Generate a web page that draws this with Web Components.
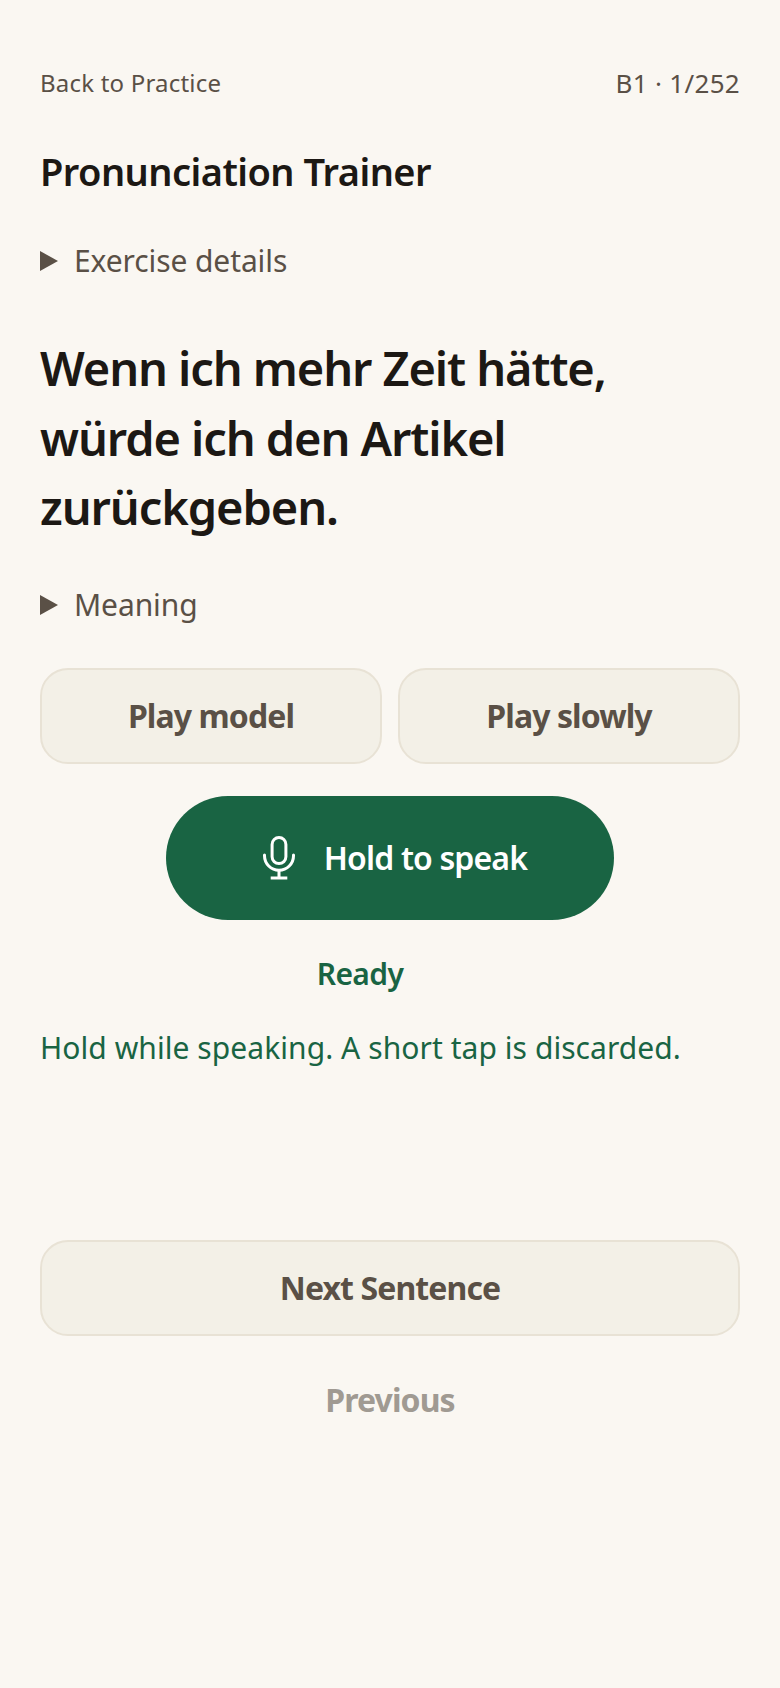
<!DOCTYPE html>
<html lang="en">
<head>
<meta charset="utf-8">
<title>Pronunciation Trainer</title>
<style>
    html, body { margin: 0; background: #faf7f2; }
    body { font-family: "Noto Sans", "Open Sans", sans-serif; }
</style>
</head>
<body>
<trainer-app>
    <trainer-header slot="header" data-back="Back to Practice" data-progress="B1 · 1/252"></trainer-header>
    <h-title slot="title">Pronunciation Trainer</h-title>
    <trainer-disclosure slot="details">Exercise details</trainer-disclosure>
    <trainer-sentence slot="sentence">Wenn ich mehr Zeit hätte, würde ich den Artikel zurückgeben.</trainer-sentence>
    <trainer-disclosure slot="meaning">Meaning</trainer-disclosure>
    <trainer-button slot="play">Play model</trainer-button>
    <trainer-button slot="play">Play slowly</trainer-button>
    <hold-button slot="hold">Hold to speak</hold-button>
    <trainer-status slot="status" data-state="Ready">Hold while speaking. A short tap is discarded.</trainer-status>
    <trainer-button slot="next">Next Sentence</trainer-button>
    <trainer-button slot="previous" data-plain>Previous</trainer-button>
</trainer-app>

<script>
class TrainerApp extends HTMLElement {
    constructor() {
        super();
        this.attachShadow({mode: "open"});
        this.shadowRoot.innerHTML = `
<style>
    :host { display: flex; flex-direction: column; box-sizing: border-box; min-height: 1688px; padding: 64px 40px 0; }
    .title { margin-top: 43px; }
    .details { margin-top: 40px; }
    .sentence { margin-top: 49px; }
    .meaning { margin-top: 38px; }
    .play { display: grid; grid-template-columns: 1fr 1fr; gap: 16px; margin-top: 39px; }
    .hold { display: flex; justify-content: center; margin-top: 32px; }
    .status { margin-top: 32px; }
    .next { display: grid; margin-top: 170px; }
    .previous { display: grid; margin-top: 32px; }
</style>
<slot name="header"></slot>
<div class="title"><slot name="title"></slot></div>
<div class="details"><slot name="details"></slot></div>
<div class="sentence"><slot name="sentence"></slot></div>
<div class="meaning"><slot name="meaning"></slot></div>
<div class="play"><slot name="play"></slot></div>
<div class="hold"><slot name="hold"></slot></div>
<div class="status"><slot name="status"></slot></div>
<div class="next"><slot name="next"></slot></div>
<div class="previous"><slot name="previous"></slot></div>
`;
    }
}
customElements.define("trainer-app", TrainerApp);

class TrainerHeader extends HTMLElement {
    constructor() {
        super();
        this.attachShadow({mode: "open"});
        this.shadowRoot.innerHTML = `
<style>
    :host { display: flex; justify-content: space-between; align-items: center; color: #5a5046; font-size: 24px; line-height: 38px; }
    a { color: inherit; text-decoration: none; letter-spacing: 0.2px; }
    span { font-size: 26px; letter-spacing: 0.3px; }
</style>
<a href="#"></a><span></span>
`;
    }

    connectedCallback() {
        this.shadowRoot.querySelector("a").textContent = this.getAttribute("data-back");
        this.shadowRoot.querySelector("span").textContent = this.getAttribute("data-progress");
    }
}
customElements.define("trainer-header", TrainerHeader);

class HTitle extends HTMLElement {
    constructor() {
        super();
        this.attachShadow({mode: "open"});
        this.shadowRoot.innerHTML = `
<style>
    :host { display: block; color: #1c1814; font-size: 38px; font-weight: 600; line-height: 52px; letter-spacing: -0.55px; }
</style>
<slot></slot>
`;
    }
}
customElements.define("h-title", HTitle);

class TrainerDisclosure extends HTMLElement {
    constructor() {
        super();
        this.attachShadow({mode: "open"});
        this.shadowRoot.innerHTML = `
<style>
    :host { display: block; color: #5a5046; font-size: 30px; line-height: 48px; letter-spacing: -0.1px; }
    summary { display: flex; align-items: center; gap: 16px; list-style: none; cursor: pointer; }
    summary::-webkit-details-marker { display: none; }
    .marker { width: 0; height: 0; border-left: 18px solid #5a5046; border-top: 10px solid transparent; border-bottom: 10px solid transparent; }
</style>
<details><summary><i class="marker"></i><span><slot></slot></span></summary></details>
`;
    }
}
customElements.define("trainer-disclosure", TrainerDisclosure);

class TrainerSentence extends HTMLElement {
    constructor() {
        super();
        this.attachShadow({mode: "open"});
        this.shadowRoot.innerHTML = `
<style>
    :host { display: block; color: #1c1814; font-size: 47px; font-weight: 600; line-height: 69.6px; letter-spacing: -1.1px; }
</style>
<slot></slot>
`;
    }
}
customElements.define("trainer-sentence", TrainerSentence);

class TrainerButton extends HTMLElement {
    constructor() {
        super();
        this.attachShadow({mode: "open"});
        this.shadowRoot.innerHTML = `
<style>
    :host { display: block; }
    button { display: block; box-sizing: border-box; width: 100%; height: 96px; border: 2px solid #e8e2d5; border-radius: 28px; background: #f3f0e7; color: #5a5046; font: 700 32px/1 "Noto Sans", "Open Sans", sans-serif; letter-spacing: -0.9px; cursor: pointer; }
    :host([data-plain]) button { height: 64px; border: 0; background: none; color: #a09a92; }
</style>
<button type="button"><slot></slot></button>
`;
    }
}
customElements.define("trainer-button", TrainerButton);

class HoldButton extends HTMLElement {
    constructor() {
        super();
        this.attachShadow({mode: "open"});
        this.shadowRoot.innerHTML = `
<style>
    :host { display: block; }
    button { display: flex; align-items: center; justify-content: center; gap: 21px; box-sizing: border-box; width: 448px; height: 124px; padding: 0 0 0 2px; border: 0; border-radius: 62px; background: #196443; color: #fff; font: 600 32px/1 "Noto Sans", "Open Sans", sans-serif; letter-spacing: -0.85px; cursor: pointer; }
    svg { width: 48px; height: 48px; fill: none; stroke: currentColor; stroke-width: 3; stroke-linecap: round; }
</style>
<button type="button">
    <svg viewBox="0 0 48 48"><rect x="17.100" y="3.500" width="13.800" height="26.100" rx="6.900"/><path d="M9.500 21v.7a14.500 14.500 0 0 0 29 0V21"/><path d="M24 36.200v7.700M15.700 43.900h16.600" stroke-linecap="butt"/></svg>
    <span><slot></slot></span>
</button>
`;
    }
}
customElements.define("hold-button", HoldButton);

class TrainerStatus extends HTMLElement {
    constructor() {
        super();
        this.attachShadow({mode: "open"});
        this.shadowRoot.innerHTML = `
<style>
    :host { display: block; color: #196443; }
    .state { display: flex; justify-content: center; padding-right: 60px; font-size: 30px; font-weight: 600; line-height: 44px; letter-spacing: -0.6px; }
    .hint { margin-top: 30px; font-size: 30px; line-height: 44px; letter-spacing: 0.06px; }
</style>
<div class="state"></div>
<div class="hint"><slot></slot></div>
`;
    }

    connectedCallback() {
        this.shadowRoot.querySelector(".state").textContent = this.getAttribute("data-state");
    }
}
customElements.define("trainer-status", TrainerStatus);
</script>
</body>
</html>
